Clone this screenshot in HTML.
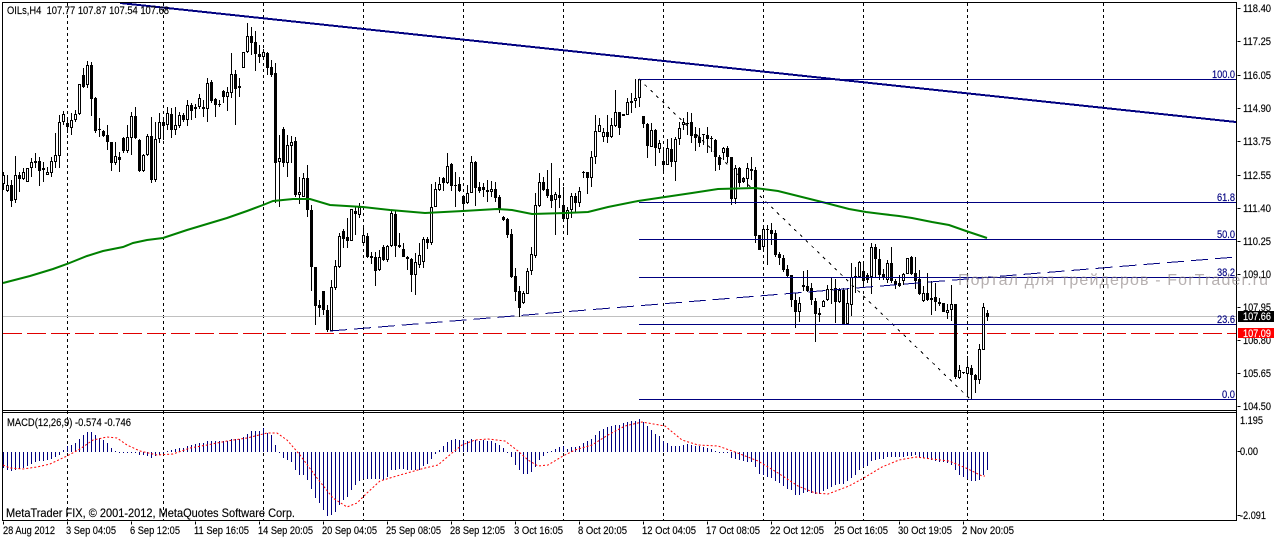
<!DOCTYPE html>
<html><head><meta charset="utf-8"><title>OILs,H4</title>
<style>
html,body{margin:0;padding:0;background:#fff;width:1274px;height:538px;overflow:hidden}
svg{display:block}
text{font-family:"Liberation Sans","Noto Sans CJK SC",sans-serif;font-size:11px;fill:#000;stroke:#000;stroke-width:.15}
.f{fill:#000080;stroke:#000080}
.w{fill:#fff;stroke:#fff}
.c{shape-rendering:crispEdges;fill:none}
</style></head><body>
<svg width="1274" height="538" viewBox="0 0 1274 538" xmlns="http://www.w3.org/2000/svg">
<rect width="1274" height="538" fill="#fff"/>
<!-- grid -->
<g class="c" transform="translate(.5,0)">
<path stroke="#000" stroke-dasharray="3 3" d="M67 3V521M163 3V521M263 3V521M363 3V521M463 3V521M563 3V521M663 3V521M763 3V521M863 3V521M967 3V521M1103 3V521"/>
</g>
<!-- level lines -->
<g class="c" transform="translate(0,.5)">
<path stroke="#c0c0c0" d="M3 316H1236"/>
<path stroke="#e00000" stroke-dasharray="19 5" d="M3 333H1236"/>
</g>
<!-- candles -->
<g class="c" transform="translate(.5,0)">
<path stroke="#000" d="M3 172V190M7 175V192M11 180V207M15 156V203M19 172V192M23 168V180M27 168V182M31 158V177M35 153V168M39 157V186M43 162V182M47 167V175M51 157V177M55 133V168M59 115V168M63 111V125M67 120V133M71 113V135M75 110V122M79 84V115M83 68V88M87 61V88M91 62V116M95 97V133M99 118V137M103 130V137M107 125V150M111 142V171M115 142V165M119 152V172M123 137V153M127 125V153M131 112V155M135 107V139M139 139V172M143 154V172M147 134V156M151 117V183M155 122V182M159 113V143M163 118V140M167 107V130M171 108V138M175 107V135M179 112V128M183 113V122M187 100V126M191 103V120M195 104V118M199 94V109M203 100V117M207 78V122M211 80V103M215 98V117M219 100V107M223 90V103M227 87V111M231 53V98M235 70V125M239 78V97M243 52V68M247 23V53M251 27V55M255 31V71M259 45V63M263 49V58M267 52V75M271 60V77M275 63V203M279 135V207M283 127V167M287 135V177M291 136V163M295 137V197M299 177V204M303 173V197M307 165V217M311 205V291M315 267V325M319 300V317M323 291V315M327 305V332M331 280V331M335 260V290M339 233V268M343 229V248M347 218V248M351 209V241M355 207V235M359 203V218M363 225V246M367 233V258M371 252V264M375 252V286M379 250V271M383 245V261M387 245V262M391 210V247M395 211V257M399 233V248M403 243V257M407 256V270M411 258V292M415 253V295M419 243V268M423 237V268M427 237V249M431 184V245M435 182V207M439 177V191M443 177V191M447 153V184M451 163V191M455 172V207M459 177V192M463 195V207M467 185V204M471 156V193M475 161V206M479 182V193M483 183V197M487 180V202M491 181V197M495 182V202M499 195V213M503 216V221M507 218V238M511 229V278M515 268V301M519 286V317M523 291V304M527 268V294M531 247V275M535 193V258M539 173V207M543 177V191M547 170V198M551 163V208M555 192V235M559 178V208M563 187V220M567 207V235M571 193V218M575 193V213M579 187V207M583 171V178M587 172V194M591 151V187M595 115V164M599 118V132M603 128V142M607 115V143M611 118V138M615 90V127M619 112V135M623 114V116M627 98V115M631 93V113M635 79V108M639 79V107M643 116V128M647 123V158M651 123V147M655 129V166M659 140V153M663 150V172M667 139V165M671 138V167M675 137V181M679 122V145M683 118V130M687 112V135M691 113V143M695 127V151M699 128V147M703 134V145M707 127V153M711 136V152M715 139V171M719 155V170M723 147V160M727 146V163M731 157V205M735 165V204M739 167V187M743 177V183M747 163V187M751 157V180M755 167V243M759 235V250M763 225V249M767 225V265M771 223V245M775 230V257M779 252V265M783 255V272M787 265V277M791 275V307M795 293V328M799 297V322M803 271V291M807 270V292M811 283V305M815 298V342M819 308V322M823 300V307M827 285V301M831 278V304M835 279V323M839 288V303M843 288V325M847 288V325M851 263V316M855 267V293M859 261V278M863 261V286M867 273V283M871 243V294M875 244V278M879 249V280M883 269V280M887 260V283M891 247V283M895 279V289M899 275V287M903 273V285M907 258V274M911 256V275M915 257V289M919 270V295M923 286V302M927 273V301M931 281V315M935 283V311M939 298V306M943 303V312M947 304V319M951 285V321M955 304V379M959 365V379M963 372V374M967 356V395M971 365V399M975 374V393M979 344V384M983 303V350M987 310V321"/>
<path stroke="#000" stroke-width="3" d="M3 175V184M7 185V191M11 185V201M15 175V200M19 175V179M23 172V179M27 168V182M31 162V168M35 161V163M39 161V171M43 168V170M47 172V175M51 161V173M55 155V162M59 122V156M63 114V122M67 123V127M71 120V128M75 114V120M79 84V114M83 75V87M87 65V85M91 65V99M95 98V131M99 129V130M103 131V136M107 135V142M111 142V163M115 156V163M119 157V160M123 138V151M127 137V151M131 116V138M135 116V138M139 140V171M143 155V171M147 136V155M151 136V180M155 139V180M159 122V139M163 122V126M167 113V125M171 114V130M175 125V130M179 115V126M183 115V120M187 105V120M191 105V111M195 107V109M199 98V107M203 107V109M207 83V109M211 82V101M215 99V105M219 104V105M223 91V97M227 92V97M231 74V93M235 74V89M239 86V88M243 52V68M247 36V52M251 36V43M255 42V54M259 54V57M263 52V57M267 53V68M271 67V75M275 73V163M279 158V162M283 129V163M287 145V163M291 142V146M295 141V195M299 192V195M303 178V197M307 178V210M311 210V267M315 267V306M319 305V308M323 291V310M327 310V330M331 287V331M335 266V288M339 236V267M343 231V239M347 237V241M351 209V241M355 211V214M359 207V215M363 235V243M367 236V257M371 256V258M375 257V271M379 257V270M383 247V260M387 246V260M391 213V246M395 214V246M399 245V247M403 249V257M407 257V259M411 259V275M415 262V275M419 255V265M423 239V262M427 239V243M431 207V243M435 189V207M439 184V190M443 178V183M447 166V183M451 164V186M455 185V186M459 184V191M463 196V204M467 193V203M471 162V193M475 162V188M479 187V191M483 187V190M487 190V192M491 189V192M495 189V198M499 197V210M503 217V220M507 219V235M511 234V277M515 276V292M519 291V308M523 293V303M527 271V294M531 254V271M535 205V256M539 182V206M543 182V190M547 189V196M551 195V201M555 194V200M559 195V198M563 205V219M567 210V219M571 196V210M575 196V203M579 191V203M583 172V173M587 172V178M591 157V178M595 131V157M599 125V132M603 132V137M607 132V137M611 125V137M615 112V126M619 112V128M623 114V116M627 102V115M631 101V103M635 98V101M639 79V98M643 116V124M647 124V146M651 130V147M655 130V148M659 143V149M663 161V165M667 148V165M671 149V162M675 139V162M679 128V139M683 122V125M687 123V124M691 122V136M695 134V138M699 137V143M703 134V135M707 135V139M711 138V139M715 140V157M719 157V165M723 148V153M727 148V157M731 157V199M735 168V199M739 168V183M743 178V182M747 168V179M751 169V171M755 170V236M759 235V250M763 229V247M767 229V230M771 230V234M775 233V255M779 254V258M783 258V270M787 269V276M791 275V300M795 300V312M799 303V312M803 285V287M807 286V291M811 288V300M815 301V314M819 313V315M823 301V307M827 289V300M831 289V290M835 288V302M839 290V302M843 290V324M847 303V324M851 277V305M855 276V278M859 262V277M863 271V281M867 275V280M871 247V277M875 247V259M879 259V275M883 274V278M887 263V280M891 263V281M895 281V285M899 283V286M903 274V281M907 258V274M911 257V274M915 273V281M919 279V294M923 293V301M927 293V300M931 298V300M935 297V302M939 302V304M943 303V312M947 310V313M951 304V310M955 304V377M959 370V378M963 372V373M967 367V374M971 368V375M975 375V380M979 349V380M983 307V350M987 313V317"/>
<path stroke="#fff" d="M3 176V183M7 186V190M15 176V199M23 173V178M27 169V181M31 163V167M47 173V174M51 162V172M55 156V161M59 123V155M63 115V121M71 121V127M75 115V119M79 85V113M87 66V84M115 157V162M127 138V150M131 117V137M143 156V170M147 137V154M155 140V179M159 123V138M167 114V124M175 126V129M179 116V125M187 106V119M199 99V106M207 84V108M227 93V96M231 75V92M243 53V67M247 37V51M263 53V56M279 159V161M287 146V162M291 143V145M299 193V194M303 179V196M331 288V330M335 267V287M339 237V266M351 210V240M359 208V214M363 236V242M379 258V269M387 247V259M391 214V245M415 263V274M419 256V264M423 240V261M431 208V242M435 190V206M439 185V189M447 167V182M467 194V202M471 163V192M491 190V191M523 294V302M527 272V293M531 255V270M535 206V255M539 183V205M555 195V199M567 211V218M571 197V209M579 192V202M591 158V177M595 132V156M599 126V131M603 133V136M611 126V136M615 113V125M627 103V114M635 99V100M639 80V97M651 131V146M659 144V148M667 149V164M675 140V161M679 129V138M683 123V124M723 149V152M735 169V198M743 179V181M747 169V178M763 230V246M799 304V311M823 302V306M827 290V299M839 291V301M847 304V323M851 278V304M859 263V276M871 248V276M887 264V279M903 275V280M907 259V273M923 294V300M947 311V312M951 305V309M959 371V377M967 368V373M979 350V379M983 308V349"/>
</g>
<!-- MA -->
<path fill="none" stroke="#008000" stroke-width="2" d="M3 283L30 276L53 269L67 264L87 256L103 251L123 247L133 243L147 240L163 238L187 230L207 224L227 218L247 211L263 205L273 201L293 199L310 199L330 205L363 207L390 210L425 213L463 211L497 209L512 210L532 214L565 213L588 212L608 207L638 201L665 197L692 193L718 189L755 188L778 191L822 202L849 209L866 212L882 214L899 216L912 218L932 222L949 225L966 231L987 238"/>
<!-- trend lines -->
<g class="c">
<path stroke="#000080" stroke-width="2" d="M120 3L1236 122"/>
<path stroke="#000080" stroke-dasharray="17 7" d="M330 331L1236 257"/>
<path stroke="#000" stroke-dasharray="3 5" d="M639 79L970 399"/>
<path stroke="#000080" transform="translate(0,.5)" d="M639 79H1236M639 202H1236M639 239H1236M639 277H1236M639 324H1236M639 399H1236"/>
</g>
<!-- fib labels -->
<text class="f" x="1212" y="78" textLength="23" lengthAdjust="spacingAndGlyphs">100.0</text>
<text class="f" x="1217" y="201" textLength="18" lengthAdjust="spacingAndGlyphs">61.8</text>
<text class="f" x="1217" y="238" textLength="18" lengthAdjust="spacingAndGlyphs">50.0</text>
<text class="f" x="1217" y="276" textLength="18" lengthAdjust="spacingAndGlyphs">38.2</text>
<text class="f" x="1217" y="323" textLength="18" lengthAdjust="spacingAndGlyphs">23.6</text>
<text class="f" x="1222" y="398" textLength="13" lengthAdjust="spacingAndGlyphs">0.0</text>
<!-- MACD -->
<g class="c" transform="translate(.5,0)">
<path stroke="#000080" d="M3 452V468M7 452V470M11 452V471M15 452V470M19 452V469M23 452V468M27 452V466M31 452V464M35 452V462M39 452V461M43 452V461M47 452V460M51 452V459M55 452V457M59 452V455M63 452V450M67 452V446M71 452V445M75 452V443M79 452V439M83 452V435M87 452V432M91 452V432M95 452V435M99 452V438M103 452V440M107 452V443M111 452V448M115 452V451M119 452V453M123 452V453M127 452V453M131 452V453M135 452V453M139 452V455M143 452V455M147 452V456M151 452V458M155 452V456M159 452V455M163 452V453M167 452V451M171 452V450M175 452V449M179 452V448M183 452V448M187 452V446M191 452V445M195 452V444M199 452V443M203 452V443M207 452V441M211 452V441M215 452V441M219 452V441M223 452V441M227 452V441M231 452V439M235 452V439M239 452V439M243 452V437M247 452V434M251 452V431M255 452V431M259 452V431M263 452V428M267 452V433M271 452V435M275 452V445M279 452V453M283 452V458M287 452V460M291 452V462M295 452V470M299 452V475M303 452V475M307 452V480M311 452V489M315 452V498M319 452V503M323 452V510M327 452V516M331 452V515M335 452V512M339 452V505M343 452V500M347 452V497M351 452V490M355 452V485M359 452V481M363 452V479M367 452V479M371 452V479M375 452V479M379 452V479M383 452V480M387 452V477M391 452V470M395 452V470M399 452V469M403 452V469M407 452V470M411 452V470M415 452V470M419 452V470M423 452V466M427 452V464M431 452V459M435 452V454M439 452V450M443 452V446M447 452V442M451 452V440M455 452V439M459 452V440M463 452V440M467 452V441M471 452V439M475 452V440M479 452V441M483 452V440M487 452V441M491 452V441M495 452V443M499 452V445M503 452V448M507 452V453M511 452V457M515 452V465M519 452V470M523 452V474M527 452V474M531 452V472M535 452V467M539 452V460M543 452V456M547 452V453M551 452V451M555 452V449M559 452V447M563 452V446M567 452V449M571 452V447M575 452V447M579 452V446M583 452V443M587 452V441M591 452V439M595 452V435M599 452V431M603 452V429M607 452V427M611 452V426M615 452V425M619 452V425M623 452V423M627 452V422M631 452V421M635 452V421M639 452V419M643 452V422M647 452V426M651 452V430M655 452V434M659 452V436M663 452V441M667 452V443M671 452V446M675 452V446M679 452V446M683 452V445M687 452V444M691 452V445M695 452V446M699 452V446M703 452V447M707 452V448M711 452V449M715 452V451M719 452V453M723 452V453M727 452V453M731 452V458M735 452V459M739 452V460M743 452V461M747 452V462M751 452V462M755 452V467M759 452V474M763 452V475M767 452V477M771 452V478M775 452V481M779 452V483M783 452V486M787 452V489M791 452V490M795 452V495M799 452V495M803 452V493M807 452V492M811 452V493M815 452V494M819 452V494M823 452V491M827 452V489M831 452V487M835 452V485M839 452V484M843 452V484M847 452V481M851 452V478M855 452V475M859 452V470M863 452V467M867 452V466M871 452V461M875 452V460M879 452V459M883 452V459M887 452V457M891 452V457M895 452V457M899 452V457M903 452V457M907 452V456M911 452V456M915 452V455M919 452V457M923 452V458M927 452V459M931 452V460M935 452V461M939 452V462M943 452V462M947 452V463M951 452V465M955 452V470M959 452V475M963 452V477M967 452V479M971 452V481M975 452V481M979 452V480M983 452V475M987 452V470"/>
</g>
<path fill="none" stroke="#ff0000" stroke-dasharray="2 2" d="M3 465L10 468L23 469L37 467L50 464L67 456L80 449L93 440L107 437L117 438L127 445L140 451L157 455L173 454L190 448L207 445L227 441L247 438L267 433L277 433L287 440L300 455L317 478L333 498L347 507L357 503L367 493L380 481L400 475L425 468L438 465L452 453L462 445L475 440L488 439L505 441L518 451L528 460L538 466L548 465L563 456L575 450L592 445L608 435L625 426L642 422L665 426L682 440L698 445L718 446L735 452L758 461L778 473L798 486L815 493L828 494L849 486L862 479L882 467L899 460L916 457L932 459L949 461L966 468L982 476L985 476"/>
<!-- frame -->
<g class="c" transform="translate(.5,.5)">
<path stroke="#000" d="M2 2H1236V520H2ZM2 410H1236M2 412H1236"/>
<path stroke="#000" d="M1237 8H1240M1237 41H1240M1237 75H1240M1237 108H1240M1237 141H1240M1237 175H1240M1237 208H1240M1237 241H1240M1237 274H1240M1237 307H1240M1237 340H1240M1237 373H1240M1237 406H1240M1237 451H1240M1237 515H1240"/>
<path stroke="#000" d="M3 521V524M67 521V524M131 521V524M195 521V524M259 521V524M323 521V524M387 521V524M451 521V524M515 521V524M579 521V524M643 521V524M707 521V524M771 521V524M835 521V524M899 521V524M963 521V524"/>
</g>
<!-- axis labels -->
<text x="1243" y="12" textLength="28" lengthAdjust="spacingAndGlyphs">118.40</text>
<text x="1243" y="45" textLength="28" lengthAdjust="spacingAndGlyphs">117.25</text>
<text x="1243" y="79" textLength="28" lengthAdjust="spacingAndGlyphs">116.05</text>
<text x="1243" y="112" textLength="28" lengthAdjust="spacingAndGlyphs">114.90</text>
<text x="1243" y="145" textLength="28" lengthAdjust="spacingAndGlyphs">113.75</text>
<text x="1243" y="179" textLength="28" lengthAdjust="spacingAndGlyphs">112.55</text>
<text x="1243" y="212" textLength="28" lengthAdjust="spacingAndGlyphs">111.40</text>
<text x="1243" y="245" textLength="28" lengthAdjust="spacingAndGlyphs">110.25</text>
<text x="1243" y="278" textLength="28" lengthAdjust="spacingAndGlyphs">109.10</text>
<text x="1243" y="311" textLength="28" lengthAdjust="spacingAndGlyphs">107.95</text>
<text x="1243" y="344" textLength="28" lengthAdjust="spacingAndGlyphs">106.80</text>
<text x="1243" y="377" textLength="28" lengthAdjust="spacingAndGlyphs">105.65</text>
<text x="1243" y="410" textLength="28" lengthAdjust="spacingAndGlyphs">104.50</text>
<text x="1240" y="424" textLength="23" lengthAdjust="spacingAndGlyphs">1.195</text>
<text x="1240" y="455" textLength="18" lengthAdjust="spacingAndGlyphs">0.00</text>
<text x="1240" y="519" textLength="26" lengthAdjust="spacingAndGlyphs">-2.091</text>
<!-- price tags -->
<rect x="1238" y="311" width="36" height="11" fill="#000"/>
<rect x="1238" y="328" width="36" height="10" fill="#ff0000"/>
<text class="w" x="1243" y="320" textLength="28" lengthAdjust="spacingAndGlyphs">107.66</text>
<text class="w" x="1243" y="337" textLength="28" lengthAdjust="spacingAndGlyphs">107.09</text>
<!-- time labels -->
<text x="3" y="534" textLength="52" lengthAdjust="spacingAndGlyphs">28 Aug 2012</text>
<text x="66" y="534" textLength="50" lengthAdjust="spacingAndGlyphs">3 Sep 04:05</text>
<text x="130" y="534" textLength="50" lengthAdjust="spacingAndGlyphs">6 Sep 12:05</text>
<text x="194" y="534" textLength="55" lengthAdjust="spacingAndGlyphs">11 Sep 16:05</text>
<text x="258" y="534" textLength="55" lengthAdjust="spacingAndGlyphs">14 Sep 20:05</text>
<text x="322" y="534" textLength="55" lengthAdjust="spacingAndGlyphs">20 Sep 04:05</text>
<text x="386" y="534" textLength="55" lengthAdjust="spacingAndGlyphs">25 Sep 08:05</text>
<text x="450" y="534" textLength="55" lengthAdjust="spacingAndGlyphs">28 Sep 12:05</text>
<text x="514" y="534" textLength="49" lengthAdjust="spacingAndGlyphs">3 Oct 16:05</text>
<text x="578" y="534" textLength="49" lengthAdjust="spacingAndGlyphs">8 Oct 20:05</text>
<text x="642" y="534" textLength="54" lengthAdjust="spacingAndGlyphs">12 Oct 04:05</text>
<text x="706" y="534" textLength="54" lengthAdjust="spacingAndGlyphs">17 Oct 08:05</text>
<text x="770" y="534" textLength="54" lengthAdjust="spacingAndGlyphs">22 Oct 12:05</text>
<text x="834" y="534" textLength="54" lengthAdjust="spacingAndGlyphs">25 Oct 16:05</text>
<text x="898" y="534" textLength="54" lengthAdjust="spacingAndGlyphs">30 Oct 19:05</text>
<text x="962" y="534" textLength="52" lengthAdjust="spacingAndGlyphs">2 Nov 20:05</text>
<!-- headers -->
<text x="7" y="14" textLength="162" lengthAdjust="spacingAndGlyphs" xml:space="preserve">OILs,H4  107.77 107.87 107.54 107.68</text>
<text x="7" y="426" textLength="124" lengthAdjust="spacingAndGlyphs">MACD(12,26,9) -0.574 -0.746</text>
<text x="6" y="517" textLength="289" lengthAdjust="spacingAndGlyphs" style="font-size:12px">MetaTrader FIX, © 2001-2012, MetaQuotes Software Corp.</text>
<!-- watermark -->
<text x="958" y="285" textLength="310" lengthAdjust="spacing" style="font-size:16px;fill:#8f8585;stroke:none;opacity:.65">Портал для трейдеров - ForTrader.ru</text>
</svg>
</body></html>
